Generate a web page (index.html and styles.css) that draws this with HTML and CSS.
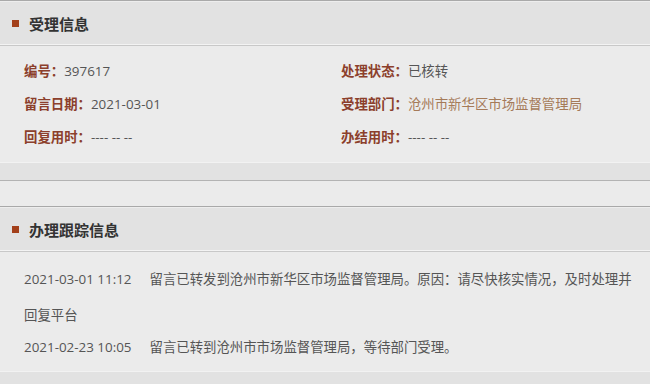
FILE: index.html
```html
<!DOCTYPE html>
<html lang="zh-CN">
  <head>
    <meta charset="UTF-8" />
    <meta name="viewport" content="width=device-width, initial-scale=1.0" />
    <title>受理信息</title>
    <link rel="stylesheet" href="styles.css">
  </head>
  <body>
    <section class="panel">
      <div class="panel-head">
        <span class="marker"></span>
        <h2 class="panel-title">受理信息</h2>
      </div>
      <div class="info-grid">
        <div class="info-item"><span class="label">编号：</span>397617</div>
        <div class="info-item"><span class="label">处理状态：</span>已核转</div>
        <div class="info-item"><span class="label">留言日期：</span>2021-03-01</div>
        <div class="info-item"><span class="label">受理部门：</span><span class="dept">沧州市新华区市场监督管理局</span></div>
        <div class="info-item"><span class="label">回复用时：</span>---- -- --</div>
        <div class="info-item"><span class="label">办结用时：</span>---- -- --</div>
      </div>
      <div class="panel-foot"></div>
    </section>

    <section class="panel">
      <div class="panel-head">
        <span class="marker"></span>
        <h2 class="panel-title">办理跟踪信息</h2>
      </div>
      <div class="trace-list">
        <p class="trace-item"><span class="trace-time">2021-03-01 11:12</span>留言已转发到沧州市新华区市场监督管理局。原因：请尽快核实情况，及时处理并回复平台</p>
        <p class="trace-item"><span class="trace-time">2021-02-23 10:05</span>留言已转到沧州市市场监督管理局，等待部门受理。</p>
      </div>
      <div class="panel-foot"></div>
    </section>
  </body>
</html>
```

FILE: styles.css
```css
body {
  font-family: "Open Sans", "Noto Sans CJK SC", sans-serif;
  margin: 0;
  padding: 0;
  background-color: #ebebeb;
  color: #555;
}

.panel {
  border-top: 1px solid #a9a9a9;
  margin-bottom: 25px;
}

.panel-head {
  display: flex;
  align-items: center;
  gap: 10px;
  height: 43px;
  padding-left: 12px;
  background-color: #e2e2e2;
  border-top: 1px solid #ededed;
  border-bottom: 1px solid #c8c8c8;
  box-shadow: inset 0 -1px 0 #f3f3f3;
}

.marker {
  width: 7px;
  height: 7px;
  background-color: #a3401b;
}

.panel-title {
  margin: 0;
  font-size: 15px;
  font-weight: 700;
  color: #333;
}

.info-grid {
  display: grid;
  grid-template-columns: 317px 1fr;
  padding: 9px 0 8px 24px;
  font-size: 13.4px;
  line-height: 33px;
}

.label {
  color: #8c3f2c;
  font-weight: 700;
}

.dept {
  color: #a57a58;
}

.panel-foot {
  height: 17px;
  background-color: #e2e2e2;
  border-top: 1px solid #f2f2f2;
  border-bottom: 1px solid #b3b3b3;
}

.trace-list {
  padding: 9px 12px 6px 24px;
  font-size: 13.4px;
  line-height: 36px;
}

.trace-item {
  margin: 0;
}

.trace-item + .trace-item {
  margin-top: -4px;
}

.trace-time {
  margin-right: 18px;
}
```
